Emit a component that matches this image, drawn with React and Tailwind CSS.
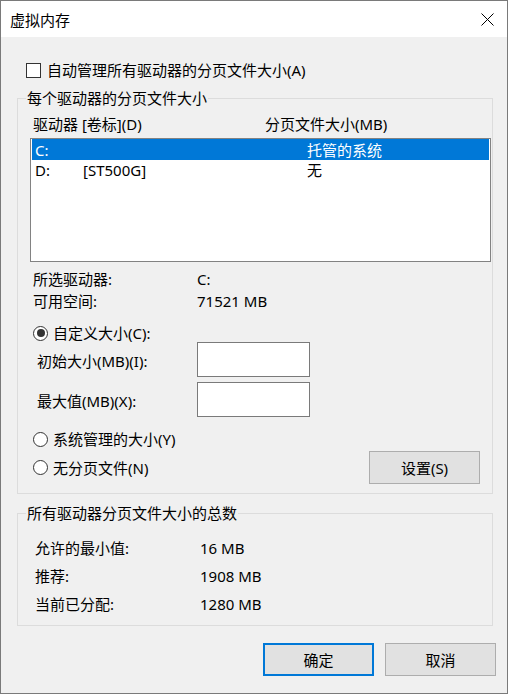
import React from 'react';

const Radio = ({ checked, label }) => (
  <div className="flex items-center h-[20px]">
    <span className="w-[15px] h-[15px] rounded-full border border-[#333333] bg-white flex items-center justify-center">
      {checked && <span className="w-[8px] h-[8px] rounded-full bg-[#333333]" />}
    </span>
    <span className="ml-[5px]">{label}</span>
  </div>
);

const InfoRow = ({ label, value, labelWidth, height }) => (
  <div className={`flex items-center ${height}`}>
    <span className={labelWidth}>{label}</span>
    <span>{value}</span>
  </div>
);

const SizeInput = ({ label }) => (
  <div className="flex h-[35px]">
    <span className="w-[179px] pl-[19px] mt-[9px] leading-[20px]">{label}</span>
    <div className="w-[113px] h-[35px] bg-white border border-[#7a7a7a]" />
  </div>
);

export default function App() {
  return (
    <div className="w-[508px] h-[694px] border border-[#7a7a7a] flex flex-col bg-[#f0f0f0] text-[15px] leading-[20px] text-black font-['Noto_Sans','Noto_Sans_CJK_SC',sans-serif] overflow-hidden">
      {/* title bar */}
      <div className="h-[36px] bg-white flex items-center justify-between shrink-0">
        <span className="pl-[9px] pt-[2px]">虚拟内存</span>
        <svg className="mr-[13px]" width="13" height="13" viewBox="0 0 13 13">
          <path d="M0.5 0.5 L12.5 12.5 M12.5 0.5 L0.5 12.5" stroke="#000" strokeWidth="1" fill="none" />
        </svg>
      </div>

      <div className="flex flex-col pl-[16px]">
        {/* auto manage */}
        <div className="flex items-center h-[20px] mt-[23px] ml-[9px]">
          <span className="w-[15px] h-[15px] border border-[#333333] bg-white" />
          <span className="ml-[6px]">自动管理所有驱动器的分页文件大小(A)</span>
        </div>

        {/* per-drive group */}
        <fieldset className="w-[476px] mt-[8px] border border-[#dcdcdc] pb-[9px]">
          <legend className="ml-[8px] px-[1px] leading-[20px]">每个驱动器的分页文件大小</legend>
          <div className="flex flex-col">
            <div className="flex h-[20px] mt-[6px] pl-[15px]">
              <span className="w-[232px]">驱动器 [卷标](D)</span>
              <span>分页文件大小(MB)</span>
            </div>

            <div className="ml-[12px] mt-[4px] w-[461px] h-[124px] bg-white border border-[#828282] flex flex-col">
              <div className="flex items-center h-[21px] bg-[#0078d7] text-white mx-[1px] pl-[3px]">
                <span className="w-[272px]">C:</span>
                <span>托管的系统</span>
              </div>
              <div className="flex items-center h-[20px] mx-[1px] pl-[3px]">
                <span className="w-[48px]">D:</span>
                <span className="w-[224px]">[ST500G]</span>
                <span>无</span>
              </div>
            </div>

            <div className="flex flex-col mt-[6px] pl-[15px]">
              <InfoRow label="所选驱动器:" value="C:" labelWidth="w-[164px]" height="h-[22px]" />
              <InfoRow label="可用空间:" value="71521 MB" labelWidth="w-[164px]" height="h-[22px]" />
            </div>

            <div className="mt-[11px] pl-[15px] h-[20px] flex items-center">
              <Radio checked label="自定义大小(C):" />
            </div>

            <div className="flex flex-col gap-[5px] mt-[-1px]">
              <SizeInput label="初始大小(MB)(I):" />
              <SizeInput label="最大值(MB)(X):" />
            </div>

            <div className="mt-[12px] pl-[15px]">
              <Radio label="系统管理的大小(Y)" />
            </div>

            <div className="flex items-center justify-between w-[462px] h-[33px] mt-[2px] pl-[15px]">
              <Radio label="无分页文件(N)" />
              <button className="w-[111px] h-[33px] bg-[#e1e1e1] border border-[#adadad]">设置(S)</button>
            </div>
          </div>
        </fieldset>

        {/* totals group */}
        <fieldset className="w-[476px] mt-[9px] border border-[#dcdcdc] pb-[7px]">
          <legend className="ml-[8px] px-[1px] leading-[20px]">所有驱动器分页文件大小的总数</legend>
          <div className="flex flex-col mt-[11px] pl-[17px]">
            <InfoRow label="允许的最小值:" value="16 MB" labelWidth="w-[165px]" height="h-[28px]" />
            <InfoRow label="推荐:" value="1908 MB" labelWidth="w-[165px]" height="h-[28px]" />
            <InfoRow label="当前已分配:" value="1280 MB" labelWidth="w-[165px]" height="h-[28px]" />
          </div>
        </fieldset>

        {/* dialog buttons */}
        <div className="flex justify-end gap-[11px] pr-[11px] mt-[17px]">
          <button className="w-[111px] h-[33px] bg-[#e1e1e1] border-2 border-[#0078d7]">确定</button>
          <button className="w-[111px] h-[33px] bg-[#e1e1e1] border border-[#adadad]">取消</button>
        </div>
      </div>
    </div>
  );
}
